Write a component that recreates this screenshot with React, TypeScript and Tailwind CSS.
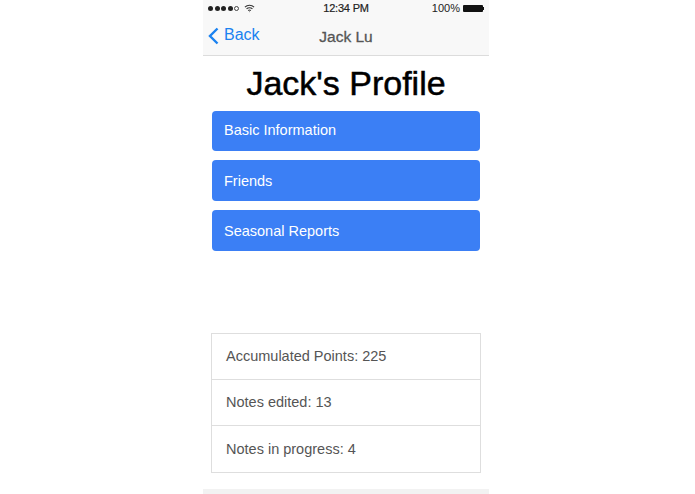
const buttons = [
  { label: 'Basic Information', className: '' },
  { label: 'Friends', className: 'pt-[2px]' },
  { label: 'Seasonal Reports', className: 'pt-[2px]' },
];

const stats = [
  { label: 'Accumulated Points: 225', className: 'h-[45.5px] pt-[1px]' },
  { label: 'Notes edited: 13', className: 'h-[46px] pt-[1px] border-t border-[#dedede]' },
  { label: 'Notes in progress: 4', className: 'h-[47px] pt-[2px] border-t border-[#dedede]' },
];

function Signal() {
  return (
    <div className="flex items-center gap-[1.5px]">
      {[0, 1, 2, 3].map((i) => (
        <span key={i} className="w-[5px] h-[5px] rounded-full bg-[#222]" />
      ))}
      <span className="w-[5px] h-[5px] rounded-full border border-[#444]" />
    </div>
  );
}

function Wifi() {
  return (
    <svg width="11" height="9" viewBox="0 0 12 9" fill="none" stroke="#333" strokeWidth="1.2">
      <path d="M1 3a7 7 0 0 1 10 0" />
      <path d="M2.8 5a4.4 4.4 0 0 1 6.4 0" />
      <path d="M4.6 6.8a2 2 0 0 1 2.8 0" />
      <circle cx="6" cy="8" r="0.5" fill="#333" stroke="none" />
    </svg>
  );
}

function BackChevron() {
  return (
    <svg width="12" height="18" viewBox="0 0 12 18" fill="none" stroke="#1a82f0" strokeWidth="2.4">
      <path d="M10.5 1.5 3 9l7.5 7.5" />
    </svg>
  );
}

export default function App() {
  return (
    <div className="w-[695px] h-[494px] bg-white pl-[203px] font-['Liberation_Sans',sans-serif] overflow-hidden">
      <div className="w-[286px] h-full flex flex-col bg-white">
        <header className="h-[56px] shrink-0 bg-[#f8f8f8] border-b border-[#dcdcdc]">
          <div className="h-[17px] flex items-center justify-between px-[5px] text-[11px] text-[#222]">
            <div className="flex items-center gap-[5px] w-[80px]">
              <Signal />
              <Wifi />
            </div>
            <span className="tracking-[-0.2px] [-webkit-text-stroke:0.2px_#222]">12:34 PM</span>
            <div className="flex items-center justify-end gap-[3px] w-[80px]">
              <span>100%</span>
              <span className="w-[20px] h-[7px] bg-[#111] rounded-[1px]" />
              <span className="w-[1px] h-[3px] bg-[#111] -ml-[3px]" />
            </div>
          </div>
          <div className="relative h-[38px] flex items-center justify-center">
            <div className="absolute left-[4px] top-[7px] flex items-center gap-[5px] text-[#1a82f0] text-[16px]">
              <BackChevron />
              <span className="-mt-[1px]">Back</span>
            </div>
            <span className="mt-[1px] text-[15.5px] text-[#555] [-webkit-text-stroke:0.3px_#555]">Jack Lu</span>
          </div>
        </header>

        <main className="flex-1 flex flex-col px-[9px]">
          <h1 className="h-[54.7px] flex items-center justify-center text-[34px] text-black leading-none [-webkit-text-stroke:0.5px_black]">
            Jack's Profile
          </h1>
          <div className="flex flex-col gap-[9px]">
            {buttons.map((b) => (
              <button
                key={b.label}
                className={`${b.className} h-[40.7px] w-full bg-[#3b7ff5] rounded-[4px] text-left pl-[12px] text-white text-[14.5px]`}
              >
                {b.label}
              </button>
            ))}
          </div>
          <ul className="-mx-[1px] mt-[82px] border border-[#dedede] text-[#555] text-[14.5px]">
            {stats.map((s) => (
              <li key={s.label} className={`${s.className} flex items-center pl-[14px]`}>
                {s.label}
              </li>
            ))}
          </ul>
        </main>

        <div className="h-[5px] shrink-0 bg-[#f2f2f2]" />
      </div>
    </div>
  );
}
